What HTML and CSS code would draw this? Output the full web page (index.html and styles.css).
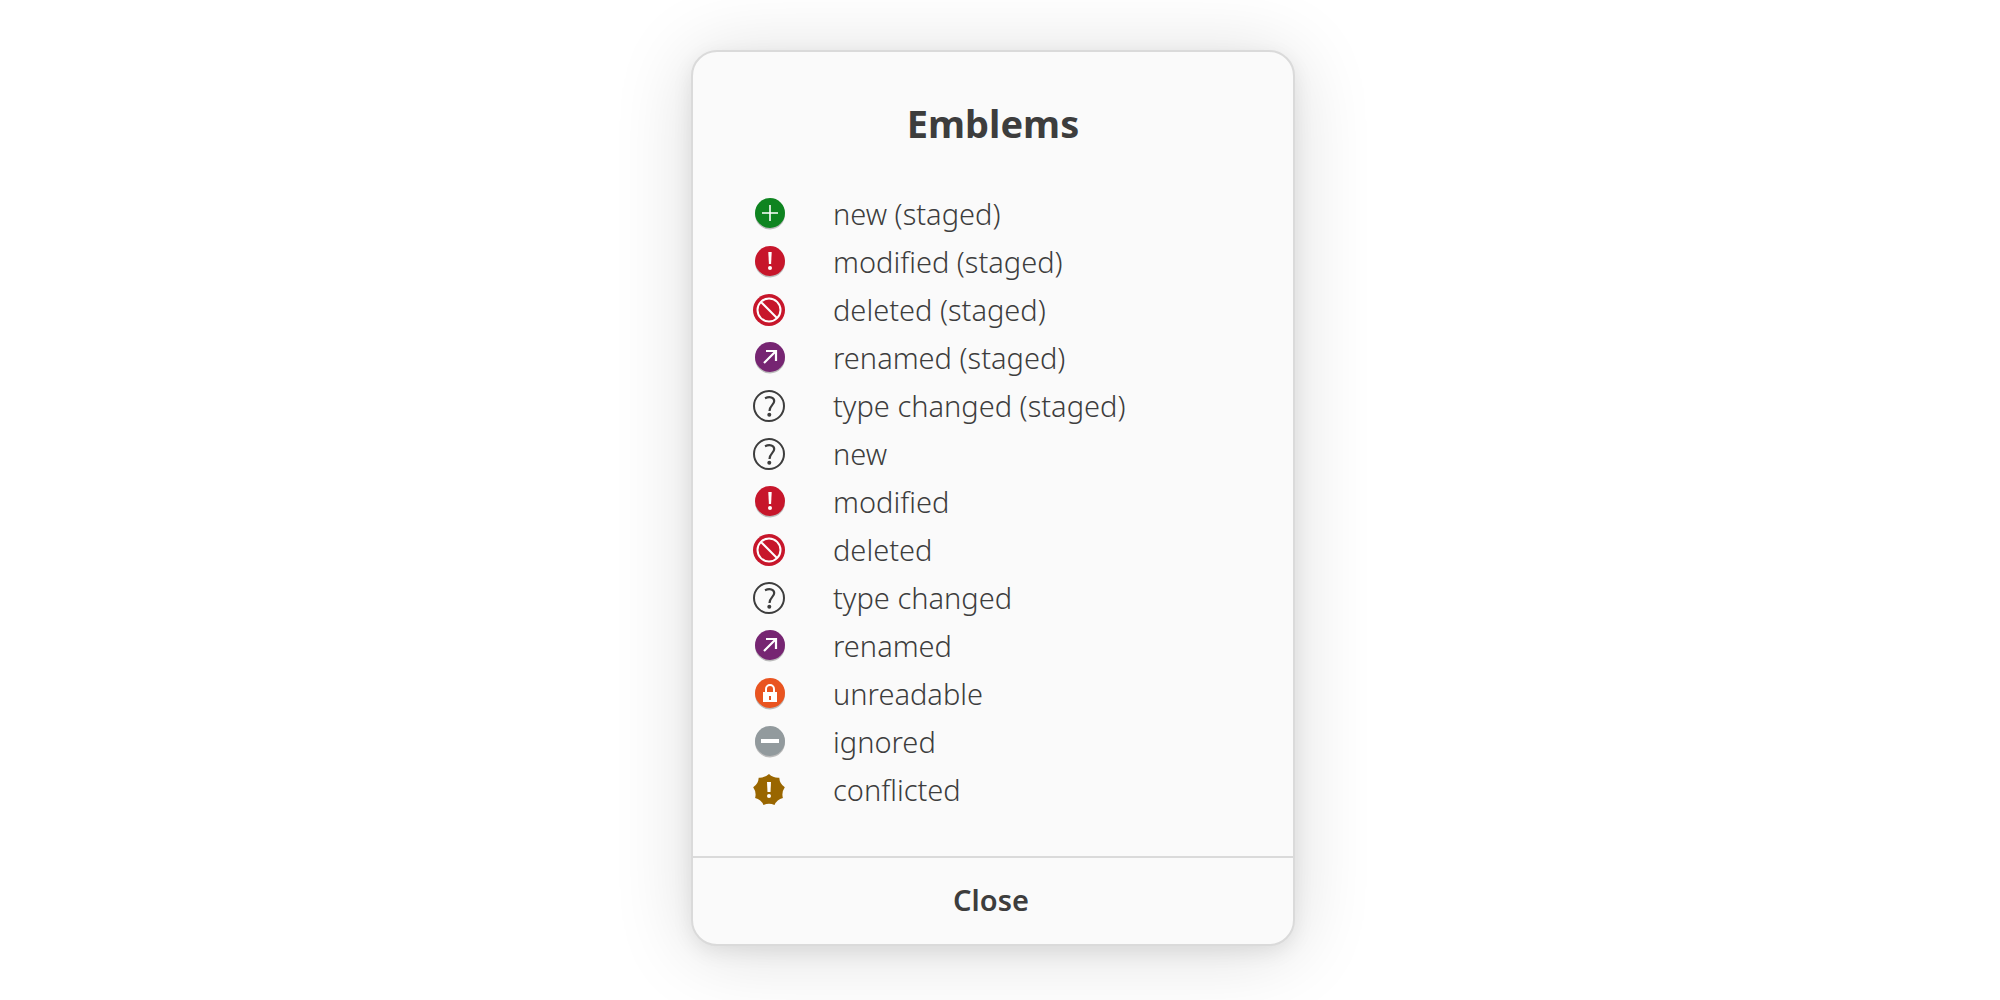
FILE: index.html
```
<!DOCTYPE html>
<html lang="en">
<head>
    <meta charset="UTF-8">
    <meta name="viewport" content="width=device-width, initial-scale=1.0">
    <title>Emblems</title>
    <link rel="stylesheet" href="styles.css">
</head>
<body>
    <!-- shared icon shapes -->
    <svg class="sprite" aria-hidden="true">
        <symbol id="icon-new" viewBox="0 0 32 32">
            <circle class="shade" cx="17" cy="16.5" r="15"/>
            <circle fill="#0e8420" cx="17" cy="15" r="15"/>
            <path fill="none" stroke="#fff" stroke-width="1.6" d="M17 7v16M9 15h16"/>
        </symbol>
        <symbol id="icon-modified" viewBox="0 0 32 32">
            <circle class="shade" cx="17" cy="16.5" r="15"/>
            <circle fill="#c7162b" cx="17" cy="15" r="15"/>
            <path fill="#fff" d="M15.3 6h3.4l-.6 12h-2.2z"/>
            <circle fill="#fff" cx="17" cy="22" r="2"/>
        </symbol>
        <symbol id="icon-deleted" viewBox="0 0 32 32">
            <circle fill="#c7162b" cx="16" cy="16" r="16"/>
            <circle fill="none" stroke="#fff" stroke-width="2" cx="16" cy="16" r="11.5"/>
            <path fill="none" stroke="#fff" stroke-width="2" d="M8 8l16 16"/>
        </symbol>
        <symbol id="icon-renamed" viewBox="0 0 32 32">
            <circle class="shade" cx="17" cy="16.5" r="15"/>
            <circle fill="#762572" cx="17" cy="15" r="15"/>
            <path fill="none" stroke="#fff" stroke-width="2.2" d="M11 21L23 9M13 9h10v10"/>
        </symbol>
        <symbol id="icon-type" viewBox="0 0 32 32">
            <circle fill="none" stroke="#3d3d3d" stroke-width="2" cx="16" cy="16" r="15"/>
            <path fill="none" stroke="#3d3d3d" stroke-width="2.2" d="M12 8.2c5-2.2 9.2-.6 9.2 2.8 0 4-4.700 4.500-4.700 10"/>
            <circle fill="#3d3d3d" cx="16.3" cy="24.8" r="2"/>
        </symbol>
        <symbol id="icon-unreadable" viewBox="0 0 32 32">
            <circle class="shade" cx="17" cy="16.5" r="15"/>
            <circle fill="#e95420" cx="17" cy="15" r="15"/>
            <path fill="none" stroke="#fff" stroke-width="2" d="M13 15v-4a4 4 0 0 1 8 0v4"/>
            <path fill="#fff" fill-rule="evenodd" d="M10 14h14v10H10zM16 18v4h2v-4z"/>
        </symbol>
        <symbol id="icon-ignored" viewBox="0 0 32 32">
            <circle class="shade" cx="17" cy="16.5" r="15"/>
            <circle fill="#929a9d" cx="17" cy="15" r="15"/>
            <path fill="#fff" d="M8 13h18v4H8z"/>
        </symbol>
        <symbol id="icon-conflicted" viewBox="0 0 32 32">
            <path fill="#996600" d="M16 0Q20.3 4.2 26.3 3.7Q26.6 9.8 31.8 13.2Q28.3 18.2 29.9 24Q23.9 25.5 21.5 31Q16 28.6 10.5 31Q8.1 25.5 2.1 24Q3.7 18.2 .2 13.2Q5.4 9.8 5.7 3.7Q11.7 4.2 16 0z"/>
            <path fill="#fff" d="M14 8h4l-.5 10h-3z"/>
            <circle fill="#fff" cx="16" cy="22" r="2"/>
        </symbol>
    </svg>

    <main class="dialog">
        <div class="content">
            <h1 class="title">Emblems</h1>
            <ul class="emblems">
                <li><svg class="icon"><use href="#icon-new"/></svg>new (staged)</li>
                <li><svg class="icon"><use href="#icon-modified"/></svg>modified (staged)</li>
                <li><svg class="icon"><use href="#icon-deleted"/></svg>deleted (staged)</li>
                <li><svg class="icon"><use href="#icon-renamed"/></svg>renamed (staged)</li>
                <li><svg class="icon"><use href="#icon-type"/></svg>type changed (staged)</li>
                <li><svg class="icon"><use href="#icon-type"/></svg>new</li>
                <li><svg class="icon"><use href="#icon-modified"/></svg>modified</li>
                <li><svg class="icon"><use href="#icon-deleted"/></svg>deleted</li>
                <li><svg class="icon"><use href="#icon-type"/></svg>type changed</li>
                <li><svg class="icon"><use href="#icon-renamed"/></svg>renamed</li>
                <li><svg class="icon"><use href="#icon-unreadable"/></svg>unreadable</li>
                <li><svg class="icon"><use href="#icon-ignored"/></svg>ignored</li>
                <li><svg class="icon"><use href="#icon-conflicted"/></svg>conflicted</li>
            </ul>
        </div>
        <button class="close" type="button">Close</button>
    </main>
</body>
</html>
```

FILE: styles.css
```
*{
    box-sizing: border-box;
    margin: 0;
    padding: 0;
}

body{
    display: flex;
    justify-content: center;
    align-items: center;
    min-height: 100vh;
    padding: 0 14px 4px 0;
    background-color: #fff;
    color: #3d3d3d;
    font-family: "Noto Sans", sans-serif;
    font-size: 29px;
    font-weight: 350;
}

.sprite{
    position: absolute;
    width: 0;
    height: 0;
}

/* dialog window */
.dialog{
    width: 100%;
    max-width: 604px;
    border: 2px solid #dadada;
    border-radius: 26px;
    background-color: #fafafa;
    box-shadow: 0 6px 20px rgba(0, 0, 0, 0.08), 0 6px 80px rgba(0, 0, 0, 0.14);
    overflow: hidden;
}

.content{
    padding: 43px 60px 42px;
}

.title{
    margin-bottom: 39px;
    font-size: 38px;
    line-height: 56px;
    text-align: center;
}

/* emblem list */
.emblems{
    list-style: none;
}
.emblems li{
    display: flex;
    align-items: center;
    gap: 48px;
    height: 48px;
    line-height: 46px;
}

.icon{
    flex: none;
    width: 32px;
    height: 32px;
}
.shade{
    fill: #000;
    opacity: 0.25;
}

/* bottom button */
.close{
    display: block;
    width: 100%;
    height: 88px;
    padding: 0 4px 4px 0;
    border: none;
    border-top: 2px solid #dadada;
    background: none;
    color: inherit;
    font: inherit;
    font-weight: 600;
    cursor: pointer;
}
.close:hover{
    background-color: #f2f2f2;
}
```
